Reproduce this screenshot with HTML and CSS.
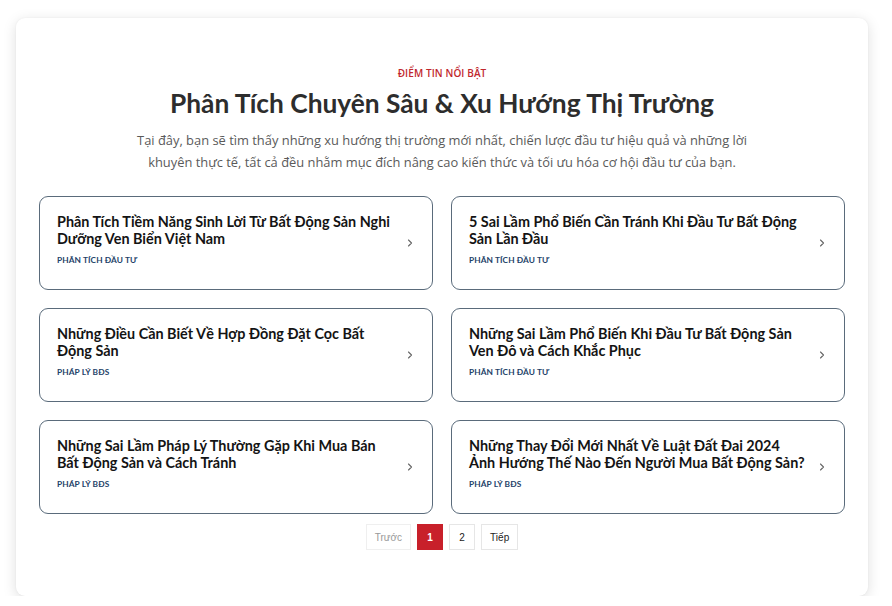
FILE: index.html
```html
<!DOCTYPE html>
<html lang="vi">
<head>
<meta charset="utf-8">
<title>Phân Tích Chuyên Sâu &amp; Xu Hướng Thị Trường</title>
<link rel="stylesheet" href="styles.css">
</head>
<body>
<section class="panel">
  <header class="intro">
    <div class="eyebrow">ĐIỂM TIN NỔI BẬT</div>
    <h1 class="title">Phân Tích Chuyên Sâu &amp; Xu Hướng Thị Trường</h1>
    <p class="lead">Tại đây, bạn sẽ tìm thấy những xu hướng thị trường mới nhất, chiến lược đầu tư hiệu quả và những lời khuyên thực tế, tất cả đều nhằm mục đích nâng cao kiến thức và tối ưu hóa cơ hội đầu tư của bạn.</p>
  </header>
  <div class="grid">
    <a class="card" href="#">
      <div class="card-body">
        <h3 class="card-title">Phân Tích Tiềm Năng Sinh Lời Từ Bất Động Sản Nghi Dưỡng Ven Biển Việt Nam</h3>
        <span class="tag">PHÂN TÍCH ĐẦU TƯ</span>
      </div>
      <svg class="chev" viewBox="0 0 8 10" width="8" height="10"><path d="M2.5 2l3 3-3 3" fill="none" stroke="#666" stroke-width="1.1" stroke-linecap="round" stroke-linejoin="round"/></svg>
    </a>
    <a class="card" href="#">
      <div class="card-body">
        <h3 class="card-title">5 Sai Lầm Phổ Biến Cần Tránh Khi Đầu Tư Bất Động Sản Lần Đầu</h3>
        <span class="tag">PHÂN TÍCH ĐẦU TƯ</span>
      </div>
      <svg class="chev" viewBox="0 0 8 10" width="8" height="10"><path d="M2.5 2l3 3-3 3" fill="none" stroke="#666" stroke-width="1.1" stroke-linecap="round" stroke-linejoin="round"/></svg>
    </a>
    <a class="card" href="#">
      <div class="card-body">
        <h3 class="card-title">Những Điều Cần Biết Về Hợp Đồng Đặt Cọc Bất Động Sản</h3>
        <span class="tag">PHÁP LÝ BĐS</span>
      </div>
      <svg class="chev" viewBox="0 0 8 10" width="8" height="10"><path d="M2.5 2l3 3-3 3" fill="none" stroke="#666" stroke-width="1.1" stroke-linecap="round" stroke-linejoin="round"/></svg>
    </a>
    <a class="card" href="#">
      <div class="card-body">
        <h3 class="card-title">Những Sai Lầm Phổ Biến Khi Đầu Tư Bất Động Sản Ven Đô và Cách Khắc Phục</h3>
        <span class="tag">PHÂN TÍCH ĐẦU TƯ</span>
      </div>
      <svg class="chev" viewBox="0 0 8 10" width="8" height="10"><path d="M2.5 2l3 3-3 3" fill="none" stroke="#666" stroke-width="1.1" stroke-linecap="round" stroke-linejoin="round"/></svg>
    </a>
    <a class="card" href="#">
      <div class="card-body">
        <h3 class="card-title">Những Sai Lầm Pháp Lý Thường Gặp Khi Mua Bán Bất Động Sản và Cách Tránh</h3>
        <span class="tag">PHÁP LÝ BĐS</span>
      </div>
      <svg class="chev" viewBox="0 0 8 10" width="8" height="10"><path d="M2.5 2l3 3-3 3" fill="none" stroke="#666" stroke-width="1.1" stroke-linecap="round" stroke-linejoin="round"/></svg>
    </a>
    <a class="card" href="#">
      <div class="card-body">
        <h3 class="card-title">Những Thay Đổi Mới Nhất Về Luật Đất Đai 2024<br>Ảnh Hướng Thế Nào Đến Người Mua Bất Động Sản?</h3>
        <span class="tag">PHÁP LÝ BĐS</span>
      </div>
      <svg class="chev" viewBox="0 0 8 10" width="8" height="10"><path d="M2.5 2l3 3-3 3" fill="none" stroke="#666" stroke-width="1.1" stroke-linecap="round" stroke-linejoin="round"/></svg>
    </a>
  </div>
  <nav class="pager">
    <span class="pg disabled">Trước</span>
    <span class="pg active">1</span>
    <a class="pg" href="#">2</a>
    <a class="pg" href="#">Tiếp</a>
  </nav>
</section>
</body>
</html>
```

FILE: styles.css
```css
* { box-sizing: border-box; }
html, body { margin: 0; padding: 0; }
body {
  background: #ffffff;
  font-family: "Open Sans", "Noto Sans", sans-serif;
  padding: 18px 24px 0 16px;
}
.panel {
  width: 852px;
  height: 578px;
  background: #fff;
  border-radius: 9px;
  box-shadow: 0 3px 14px rgba(0, 0, 0, 0.13), 0 0 2px rgba(0, 0, 0, 0.06);
  padding: 48px 23px 0;
}
.intro {
  text-align: center;
}
.eyebrow {
  font-family: "Open Sans", sans-serif;
  font-weight: 600;
  font-size: 10px;
  line-height: 14px;
  color: #c1272d;
  letter-spacing: 0.1px;
}
.title {
  margin: 6px 0 0;
  font-family: Lato, sans-serif;
  font-weight: 700;
  font-size: 26.3px;
  line-height: 34px;
  color: #2d2d2d;
}
.lead {
  margin: 9px auto 0;
  max-width: 640px;
  font-size: 12.9px;
  line-height: 22px;
  color: #5a5a5a;
}
.grid {
  margin-top: 23px;
  display: grid;
  grid-template-columns: 1fr 1fr;
  column-gap: 18px;
  row-gap: 18px;
}
.card {
  height: 94px;
  display: flex;
  align-items: center;
  gap: 6px;
  padding: 0 18px 8px 17px;
  border: 1px solid #5a6b7b;
  border-radius: 9px;
  text-decoration: none;
  color: inherit;
}
.card-body {
  flex: 1;
  min-width: 0;
}
.card-title {
  margin: 0;
  font-family: Lato, sans-serif;
  font-weight: 700;
  font-size: 14.4px;
  line-height: 17.5px;
  color: #141414;
}
.tag {
  display: block;
  margin-top: 6px;
  font-family: Lato, sans-serif;
  font-weight: 700;
  font-size: 8.3px;
  line-height: 12px;
  color: #1d4268;
  letter-spacing: 0.1px;
}
.chev {
  flex: none;
  margin-top: 8px;
}
.pager {
  margin-top: 10px;
  display: flex;
  justify-content: center;
  gap: 6px;
}
.pg {
  height: 26px;
  min-width: 26px;
  padding: 0 8px;
  display: flex;
  align-items: center;
  justify-content: center;
  border: 1px solid #e6e6e6;
  font-family: "Liberation Sans", Arial, sans-serif;
  font-size: 10px;
  color: #222;
  text-decoration: none;
  background: #fff;
}
.pg.disabled { color: #999; border-color: #efefef; }
.pg.active {
  background: #c8202a;
  border-color: #c8202a;
  color: #fff;
  font-weight: 700;
}
```
